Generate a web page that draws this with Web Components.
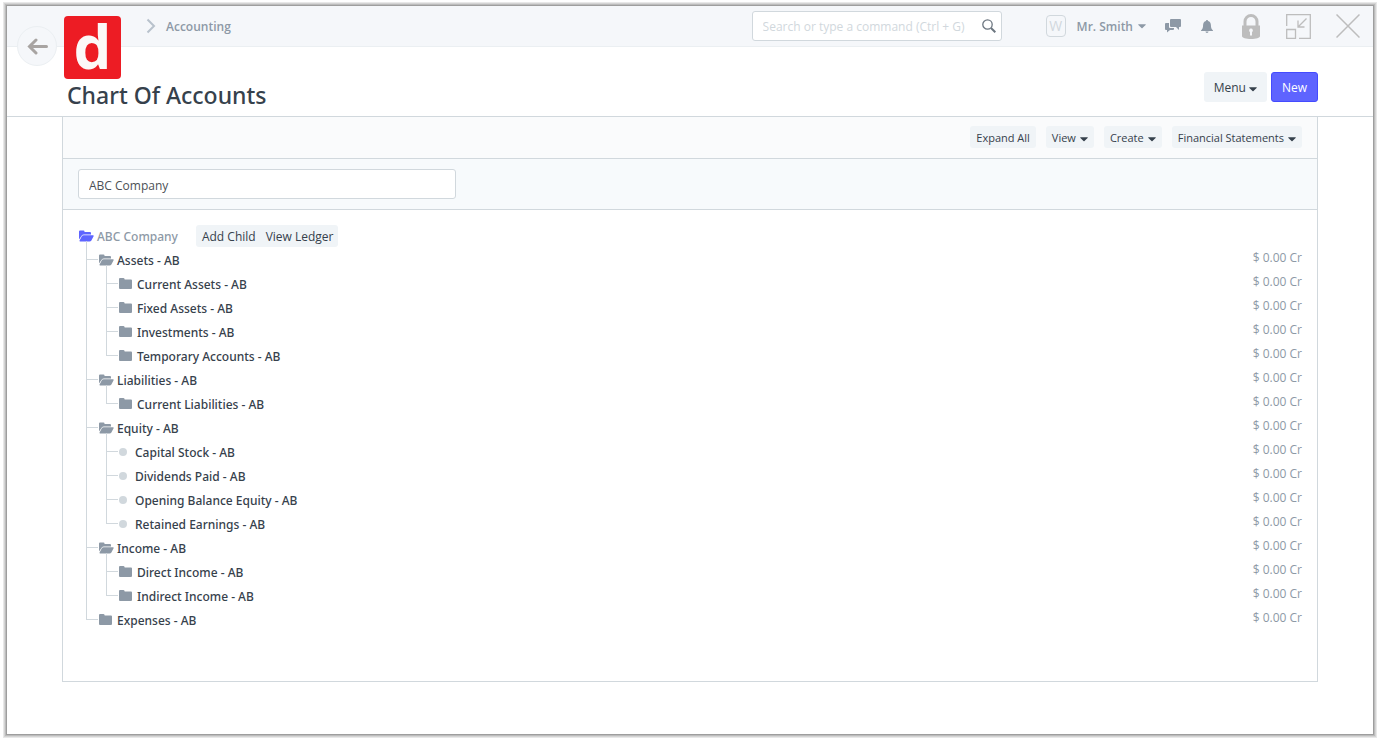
<!DOCTYPE html>
<html lang="en">
<head>
<meta charset="utf-8">
<meta name="viewport" content="width=device-width, initial-scale=1">
<title>Chart Of Accounts</title>
<style>
    :root {
        --text: #36414c;
        --muted: #8d99a6;
        --border: #d1d8dd;
        --btn: #f0f4f7;
        --primary: #5e64ff;
    }
    body {
        margin: 2px 3px;
        background: #fff;
        color: var(--text);
        font: 12px/18px "Open Sans", "Noto Sans", sans-serif;
    }
</style>
</head>
<body>
<app-window>
    <app-navbar slot="navbar" section="Accounting" user="Mr. Smith" initial="W"></app-navbar>
    <page-head slot="head" heading="Chart Of Accounts">
        <app-button size="md" caret>Menu</app-button>
        <app-button size="md" primary>New</app-button>
    </page-head>
    <page-panel>
        <app-button slot="actions">Expand All</app-button>
        <app-button slot="actions" caret>View</app-button>
        <app-button slot="actions" caret>Create</app-button>
        <app-button slot="actions" caret>Financial Statements</app-button>
        <company-filter slot="filter" value="ABC Company"></company-filter>
        <account-node label="ABC Company" kind="open" root>
            <tree-toolbar slot="toolbar"></tree-toolbar>
            <account-node label="Assets - AB" kind="open" balance="$ 0.00 Cr">
                <account-node label="Current Assets - AB" kind="folder" balance="$ 0.00 Cr"></account-node>
                <account-node label="Fixed Assets - AB" kind="folder" balance="$ 0.00 Cr"></account-node>
                <account-node label="Investments - AB" kind="folder" balance="$ 0.00 Cr"></account-node>
                <account-node label="Temporary Accounts - AB" kind="folder" balance="$ 0.00 Cr"></account-node>
            </account-node>
            <account-node label="Liabilities - AB" kind="open" balance="$ 0.00 Cr">
                <account-node label="Current Liabilities - AB" kind="folder" balance="$ 0.00 Cr"></account-node>
            </account-node>
            <account-node label="Equity - AB" kind="open" balance="$ 0.00 Cr">
                <account-node label="Capital Stock - AB" kind="leaf" balance="$ 0.00 Cr"></account-node>
                <account-node label="Dividends Paid - AB" kind="leaf" balance="$ 0.00 Cr"></account-node>
                <account-node label="Opening Balance Equity - AB" kind="leaf" balance="$ 0.00 Cr"></account-node>
                <account-node label="Retained Earnings - AB" kind="leaf" balance="$ 0.00 Cr"></account-node>
            </account-node>
            <account-node label="Income - AB" kind="open" balance="$ 0.00 Cr">
                <account-node label="Direct Income - AB" kind="folder" balance="$ 0.00 Cr"></account-node>
                <account-node label="Indirect Income - AB" kind="folder" balance="$ 0.00 Cr"></account-node>
            </account-node>
            <account-node label="Expenses - AB" kind="folder" balance="$ 0.00 Cr"></account-node>
        </account-node>
    </page-panel>
</app-window>

<script>
const CARET = '<svg class="caret" width="8" height="5" viewBox="0 0 8 5" aria-hidden="true"><path d="M.8.3h6.400c.6 0 .8.4.4.8L4.500 4c-.3.3-.7.3-1 0L.4 1.100C0 .7.200.3.8.3z" fill="currentColor"/></svg>';

// Outer frame; the soft edge is a stack of one pixel rings
class AppWindow extends HTMLElement {
    constructor() {
        super();
        this.attachShadow({ mode: 'open' });
    }

    connectedCallback() {
        this.shadowRoot.innerHTML = `
            <style>
                :host {
                    display: block;
                    padding: 1px;
                    border: 1px solid #e8e8e8;
                    outline: 1px solid #f5f5f5;
                    background: #d4d4d4;
                }
                .frame {
                    min-height: calc(100vh - 12px);
                    padding: 1px;
                    border: 1px solid #bcbcbc;
                    background: #9e9e9e;
                    background: linear-gradient(#fff, #fff) content-box, #9e9e9e;
                }
                main {
                    padding: 0 55px;
                }
            </style>
            <div class="frame">
                <slot name="navbar"></slot>
                <slot name="head"></slot>
                <main><slot></slot></main>
            </div>
        `;
    }
}

// Top bar: logo, breadcrumb, search, user and window controls
class AppNavbar extends HTMLElement {
    constructor() {
        super();
        this.attachShadow({ mode: 'open' });
    }

    connectedCallback() {
        const section = this.getAttribute('section');
        const user = this.getAttribute('user');
        const initial = this.getAttribute('initial');

        this.shadowRoot.innerHTML = `
            <style>
                :host {
                    display: block;
                    position: relative;
                    background: #f5f7fa;
                    border-bottom: 1px solid #ebeff2;
                }
                nav {
                    display: flex;
                    align-items: center;
                    height: 40px;
                    padding: 0 13px 0 139px;
                }
                button {
                    display: flex;
                    align-items: center;
                    padding: 0;
                    border: 0;
                    background: none;
                    color: inherit;
                    font: inherit;
                    cursor: pointer;
                }
                svg {
                    display: block;
                }
                .back {
                    position: absolute;
                    left: 10px;
                    top: 20px;
                    width: 40px;
                    height: 40px;
                    box-sizing: border-box;
                    justify-content: center;
                    border: 1px solid #ebeff2;
                    border-radius: 50%;
                    background: #f5f7fa;
                }
                .logo {
                    position: absolute;
                    left: 57px;
                    top: 10px;
                    width: 57px;
                    height: 63px;
                    border-radius: 4px;
                    background: #ed1c24;
                    color: #fcf8f8;
                    font-size: 60px;
                    font-weight: 700;
                    line-height: 60px;
                    text-align: center;
                    text-decoration: none;
                }
                .crumb {
                    display: flex;
                    align-items: center;
                    gap: 10px;
                    color: var(--muted);
                    font-weight: 600;
                    text-decoration: none;
                }
                .crumb span,
                .user span {
                    padding-top: 2px;
                }
                .search {
                    display: flex;
                    align-items: center;
                    box-sizing: border-box;
                    width: 250px;
                    height: 30px;
                    margin-left: auto;
                    padding: 0 5px 0 10px;
                    border: 1px solid var(--border);
                    border-radius: 3px;
                    background: #fff;
                }
                .search input {
                    flex: 1;
                    min-width: 0;
                    padding: 2px 0 0;
                    border: 0;
                    outline: 0;
                    background: none;
                    color: var(--text);
                    font: inherit;
                }
                .search input::placeholder {
                    color: var(--border);
                    opacity: 1;
                }
                .user {
                    gap: 5px;
                    margin-left: 44px;
                    color: var(--muted);
                    font-weight: 600;
                }
                .user .avatar {
                    box-sizing: border-box;
                    width: 20px;
                    height: 22px;
                    margin-right: 6px;
                    padding: 0;
                    border: 1px solid var(--border);
                    border-radius: 4px;
                    color: var(--border);
                    font-size: 14px;
                    font-weight: 400;
                    line-height: 20px;
                    text-align: center;
                }
                .icons {
                    display: flex;
                    align-items: center;
                    gap: 20px;
                    margin-left: 19px;
                    color: var(--muted);
                }
                .controls {
                    display: flex;
                    align-items: center;
                    gap: 25px;
                    margin-left: 28px;
                    color: #bdbdbd;
                }
            </style>

            <nav>
                <a class="crumb" href="#accounting">
                    <svg width="10" height="16" viewBox="0 0 10 16"><path d="M1.500 1.500 8 8l-6.500 6.500" fill="none" stroke="#b8c2cc" stroke-width="2"/></svg>
                    <span>${section}</span>
                </a>
                <div class="search">
                    <input type="text" placeholder="Search or type a command (Ctrl + G)" aria-label="Search">
                    <button type="button" aria-label="Search">
                        <svg width="14" height="14" viewBox="0 0 14 14" fill="none" stroke="#6c7680"><circle cx="5.500" cy="5.500" r="4.700" stroke-width="1.300"/><path d="m9 9 4.300 4.300" stroke-width="2"/></svg>
                    </button>
                </div>
                <button class="user" type="button">
                    <span class="avatar">${initial}</span><span>${user}</span>${CARET}
                </button>
                <div class="icons">
                    <button type="button" aria-label="Chat">
                        <svg width="16" height="14" viewBox="0 0 16 14" fill="currentColor"><path d="M6 0h9q1 0 1 1v6q0 1-1 1h-1v3l-3-3H6q-1 0-1-1V1q0-1 1-1z"/><path d="M1 4h3v4q0 1 1 1h4v1q0 1-1 1H5l-3 2.500V11H1q-1 0-1-1V5q0-1 1-1z"/></svg>
                    </button>
                    <button type="button" aria-label="Notifications">
                        <svg width="12" height="13" viewBox="0 0 12 13" fill="currentColor"><path d="M6 0c.6 0 1 .4 1 1 2 .5 2.900 2.100 2.900 4 0 3 .8 4.400 2.100 5.500v.5H0v-.5C1.300 9.400 2.100 8 2.100 5c0-1.900.9-3.500 2.900-4 0-.6.4-1 1-1zM4.500 11.600h3c0 .9-.7 1.400-1.500 1.400s-1.500-.5-1.500-1.400z"/></svg>
                    </button>
                </div>
                <div class="controls">
                    <button type="button" aria-label="Lock">
                        <svg width="20" height="25" viewBox="0 0 20 25"><path d="M4 13V7.500a6 6 0 0 1 12 0V13" fill="none" stroke="currentColor" stroke-width="3"/><path d="M1 11.500h18V22c0 2-4 3-9 3s-9-1-9-3z" fill="currentColor"/><path d="M10 14.500a1.900 1.900 0 0 1 1 3.500v3.500H9V18a1.900 1.900 0 0 1 1-3.500z" fill="#f5f7fa"/></svg>
                    </button>
                    <button type="button" aria-label="Minimize">
                        <svg width="25" height="25" viewBox="0 0 25 25" fill="none" stroke="currentColor" stroke-width="1.300"><path d="M.7 12V.7h23.600v23.600H13M.7 15.500h8.800v8.800H.7zM20.500 4.500l-8 8M12 6.500v6.500h6.500"/></svg>
                    </button>
                    <button type="button" aria-label="Close">
                        <svg width="24" height="24" viewBox="0 0 24 24" fill="none" stroke="currentColor" stroke-width="1.500"><path d="m.5.500 23 23M23.500.500l-23 23"/></svg>
                    </button>
                </div>
            </nav>
            <button class="back" type="button" aria-label="Back">
                <svg width="21" height="17" viewBox="0 0 21 17" fill="none" stroke="#a8a4a2" stroke-width="3" stroke-linecap="round"><path d="M19.500 8.500H3M9 2 2.500 8.500 9 15"/></svg>
            </button>
            <a class="logo" href="#home">d</a>
        `;
    }
}

class PageHead extends HTMLElement {
    constructor() {
        super();
        this.attachShadow({ mode: 'open' });
    }

    connectedCallback() {
        this.shadowRoot.innerHTML = `
            <style>
                :host {
                    display: flex;
                    justify-content: space-between;
                    align-items: flex-end;
                    padding: 25px 55px 5px 60px;
                    border-bottom: 1px solid var(--border);
                }
                h1 {
                    margin: 0;
                    font-family: "Noto Sans", "Open Sans", sans-serif;
                    font-size: 23px;
                    font-weight: 500;
                    line-height: 32px;
                }
                .actions {
                    display: flex;
                    align-self: flex-start;
                    gap: 4px;
                    margin-bottom: 9px;
                }
            </style>
            <h1>${this.getAttribute('heading')}</h1>
            <div class="actions"><slot></slot></div>
        `;
    }
}

class AppButton extends HTMLElement {
    constructor() {
        super();
        this.attachShadow({ mode: 'open' });
    }

    connectedCallback() {
        this.shadowRoot.innerHTML = `
            <style>
                :host {
                    display: block;
                    font-size: 11px;
                }
                button {
                    display: flex;
                    align-items: center;
                    gap: 4px;
                    padding: 3px 6px 1px;
                    border: 0;
                    border-radius: 3px;
                    background: var(--btn);
                    color: var(--text);
                    font: inherit;
                    white-space: nowrap;
                    cursor: pointer;
                }
                :host([size="md"]) {
                    font-size: 12px;
                }
                :host([size="md"]) button {
                    gap: 3px;
                    padding: 7px 10px 5px;
                }
                :host([primary]) button {
                    padding: 6px 10px 4px;
                    border: 1px solid #444bff;
                    background: var(--primary);
                    color: #fff;
                }
                .caret {
                    margin-top: 2px;
                }
            </style>
            <button type="button"><slot></slot>${this.hasAttribute('caret') ? CARET : ''}</button>
        `;
    }
}

// Bordered panel: action strip, filter strip, then the tree
class PagePanel extends HTMLElement {
    constructor() {
        super();
        this.attachShadow({ mode: 'open' });
    }

    connectedCallback() {
        this.shadowRoot.innerHTML = `
            <style>
                :host {
                    display: block;
                    border: 1px solid var(--border);
                    border-top: 0;
                }
                .actions {
                    display: flex;
                    justify-content: flex-end;
                    gap: 10px;
                    padding: 9px 15px 10px;
                    border-bottom: 1px solid var(--border);
                    background: #fafbfc;
                }
                .filter {
                    padding: 10px 15px;
                    border-bottom: 1px solid var(--border);
                    background: #f7fafc;
                }
                .tree {
                    padding: 14px 15px 49px 16px;
                }
            </style>
            <div class="actions"><slot name="actions"></slot></div>
            <div class="filter"><slot name="filter"></slot></div>
            <div class="tree"><slot></slot></div>
        `;
    }
}

class CompanyFilter extends HTMLElement {
    constructor() {
        super();
        this.attachShadow({ mode: 'open' });
    }

    connectedCallback() {
        this.shadowRoot.innerHTML = `
            <style>
                :host {
                    display: block;
                    width: calc(100% / 3 - 30px);
                }
                input {
                    display: block;
                    box-sizing: border-box;
                    width: 100%;
                    height: 30px;
                    padding: 2px 10px 0;
                    border: 1px solid var(--border);
                    border-radius: 3px;
                    background: #fff;
                    color: #4c5056;
                    font: inherit;
                }
            </style>
            <input type="text" aria-label="Company" value="${this.getAttribute('value')}">
        `;
    }
}

class TreeToolbar extends HTMLElement {
    constructor() {
        super();
        this.attachShadow({ mode: 'open' });
    }

    connectedCallback() {
        this.shadowRoot.innerHTML = `
            <style>
                :host {
                    display: flex;
                    margin-left: 18px;
                    border-radius: 3px;
                    background: var(--btn);
                }
                button {
                    padding: 3px 4px 1px 6px;
                    border: 0;
                    background: none;
                    color: var(--text);
                    font: inherit;
                    cursor: pointer;
                }
            </style>
            <button type="button">Add Child</button>
            <button type="button">View Ledger</button>
        `;
    }
}

const NODE_ICONS = {
    open: '<svg width="15" height="12" viewBox="0 0 15 12" fill="currentColor"><path d="M0 9.500V1.500Q0 .5 1 .5h3.500q1 0 1 1V2H11q1 0 1 1v1.500H5Q3.500 4.500 2.600 5.800z"/><path d="M4.700 5.300H14q1.200 0 .6 1l-2.200 4.200q-.6 1-1.900 1H1.200q-1.200 0-.6-1l2.200-4.200q.6-1 1.900-1z"/></svg>',
    folder: '<svg width="14" height="12" viewBox="0 0 14 12" fill="currentColor"><path d="M1 0h3.500q1.200 0 1.200 1.500H12q1 0 1 1V10q0 1-1 1H1q-1 0-1-1V1q0-1 1-1z"/></svg>',
    leaf: '<svg width="12" height="8" viewBox="0 0 12 8" fill="#d1d8dd"><circle cx="4" cy="4" r="4"/></svg>'
};

// One account; child accounts go in the default slot
class AccountNode extends HTMLElement {
    constructor() {
        super();
        this.attachShadow({ mode: 'open' });
    }

    connectedCallback() {
        this.shadowRoot.innerHTML = `
            <style>
                :host {
                    display: grid;
                    grid-template-columns: 13px 1fr;
                    --rail-height: 100%;
                }
                :host(:last-child) {
                    --rail-height: 19px;
                }
                :host([root]) {
                    grid-template-columns: 1fr;
                }
                /* rail reaches up to the bottom of the parent icon */
                .rail {
                    grid-row: 1 / 3;
                    margin-top: -7px;
                    background:
                        linear-gradient(var(--border), var(--border)) 0 0 / 1px var(--rail-height) no-repeat,
                        linear-gradient(var(--border), var(--border)) 0 18px / 12px 1px no-repeat;
                }
                :host([root]) .rail {
                    display: none;
                }
                .row {
                    display: flex;
                    align-items: center;
                    height: 24px;
                }
                .label {
                    display: flex;
                    align-items: center;
                    gap: 4px;
                    padding: 0;
                    border: 0;
                    background: none;
                    color: var(--text);
                    font: inherit;
                    font-family: "Noto Sans", "Open Sans", sans-serif;
                    font-weight: 500;
                    white-space: nowrap;
                    cursor: pointer;
                }
                .label svg {
                    color: var(--muted);
                }
                .label span {
                    padding-top: 2px;
                }
                :host([kind="open"]) svg {
                    margin-right: -1px;
                }
                :host([root]) .label {
                    color: var(--muted);
                }
                :host([root]) .label svg {
                    color: var(--primary);
                }
                .balance {
                    align-self: flex-start;
                    margin-left: auto;
                    padding-top: 1px;
                    color: var(--muted);
                }
                .children {
                    margin-left: 7px;
                }
            </style>
            <div class="rail"></div>
            <div class="row">
                <button class="label" type="button">${NODE_ICONS[this.getAttribute('kind')]}<span>${this.getAttribute('label')}</span></button>
                <slot name="toolbar"></slot>
                <span class="balance">${this.getAttribute('balance') || ''}</span>
            </div>
            <div class="children"><slot></slot></div>
        `;

        this.shadowRoot.querySelector('.label').addEventListener('click', () => {
            const children = this.shadowRoot.querySelector('.children');
            children.hidden = !children.hidden;
        });
    }
}

customElements.define('app-window', AppWindow);
customElements.define('app-navbar', AppNavbar);
customElements.define('page-head', PageHead);
customElements.define('app-button', AppButton);
customElements.define('page-panel', PagePanel);
customElements.define('company-filter', CompanyFilter);
customElements.define('tree-toolbar', TreeToolbar);
customElements.define('account-node', AccountNode);
</script>
</body>
</html>
